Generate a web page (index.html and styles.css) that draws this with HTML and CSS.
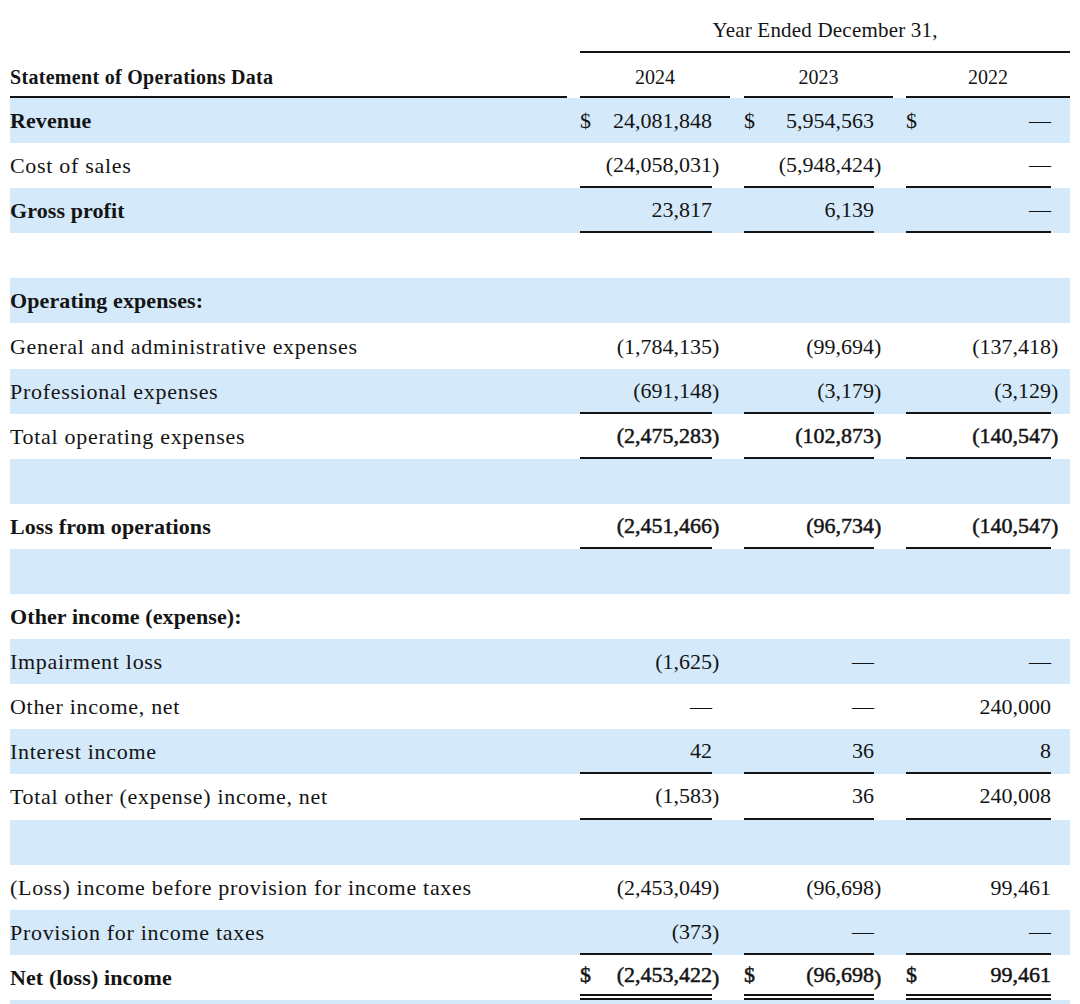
FILE: index.html
```html
<!DOCTYPE html>
<html lang="en">
<head>
<meta charset="utf-8">
<title>Statement of Operations Data</title>
<link rel="stylesheet" href="styles.css">
</head>
<body>
<table class="fin">
  <colgroup>
    <col class="c-label"><col class="c-gap1">
    <col class="c-dol"><col class="c-v24"><col class="c-p24"><col class="c-gap2">
    <col class="c-dol"><col class="c-v23"><col class="c-p23"><col class="c-gap1">
    <col class="c-dol"><col class="c-v22"><col class="c-p22">
  </colgroup>
  <thead>
    <tr class="h-top">
      <th colspan="2"></th>
      <th colspan="11" class="period">Year Ended December 31,</th>
    </tr>
    <tr class="h-years">
      <th class="stmt">Statement of Operations Data</th>
      <th></th>
      <th colspan="3" class="year">2024</th>
      <th></th>
      <th colspan="3" class="year">2023</th>
      <th></th>
      <th colspan="3" class="year">2022</th>
    </tr>
  </thead>
  <tbody>
    <tr class="alt strong">
      <td class="label">Revenue</td><td></td>
      <td class="dol">$</td><td class="val">24,081,848</td><td class="par"></td><td></td>
      <td class="dol">$</td><td class="val">5,954,563</td><td class="par"></td><td></td>
      <td class="dol">$</td><td class="val">—</td><td class="par"></td>
    </tr>
    <tr class="ul">
      <td class="label">Cost of sales</td><td></td>
      <td class="dol"></td><td class="val">(24,058,031</td><td class="par">)</td><td></td>
      <td class="dol"></td><td class="val">(5,948,424</td><td class="par">)</td><td></td>
      <td class="dol"></td><td class="val">—</td><td class="par"></td>
    </tr>
    <tr class="alt strong ul">
      <td class="label">Gross profit</td><td></td>
      <td class="dol"></td><td class="val">23,817</td><td class="par"></td><td></td>
      <td class="dol"></td><td class="val">6,139</td><td class="par"></td><td></td>
      <td class="dol"></td><td class="val">—</td><td class="par"></td>
    </tr>
    <tr class="blank"><td colspan="13"></td></tr>
    <tr class="alt strong">
      <td class="label">Operating expenses:</td><td colspan="12"></td>
    </tr>
    <tr>
      <td class="label">General and administrative expenses</td><td></td>
      <td class="dol"></td><td class="val">(1,784,135</td><td class="par">)</td><td></td>
      <td class="dol"></td><td class="val">(99,694</td><td class="par">)</td><td></td>
      <td class="dol"></td><td class="val">(137,418</td><td class="par">)</td>
    </tr>
    <tr class="alt ul">
      <td class="label">Professional expenses</td><td></td>
      <td class="dol"></td><td class="val">(691,148</td><td class="par">)</td><td></td>
      <td class="dol"></td><td class="val">(3,179</td><td class="par">)</td><td></td>
      <td class="dol"></td><td class="val">(3,129</td><td class="par">)</td>
    </tr>
    <tr class="ul boldnum">
      <td class="label">Total operating expenses</td><td></td>
      <td class="dol"></td><td class="val">(2,475,283</td><td class="par">)</td><td></td>
      <td class="dol"></td><td class="val">(102,873</td><td class="par">)</td><td></td>
      <td class="dol"></td><td class="val">(140,547</td><td class="par">)</td>
    </tr>
    <tr class="alt blank"><td colspan="13"></td></tr>
    <tr class="strong ul boldnum">
      <td class="label">Loss from operations</td><td></td>
      <td class="dol"></td><td class="val">(2,451,466</td><td class="par">)</td><td></td>
      <td class="dol"></td><td class="val">(96,734</td><td class="par">)</td><td></td>
      <td class="dol"></td><td class="val">(140,547</td><td class="par">)</td>
    </tr>
    <tr class="alt blank"><td colspan="13"></td></tr>
    <tr class="strong">
      <td class="label">Other income (expense):</td><td colspan="12"></td>
    </tr>
    <tr class="alt">
      <td class="label">Impairment loss</td><td></td>
      <td class="dol"></td><td class="val">(1,625</td><td class="par">)</td><td></td>
      <td class="dol"></td><td class="val">—</td><td class="par"></td><td></td>
      <td class="dol"></td><td class="val">—</td><td class="par"></td>
    </tr>
    <tr>
      <td class="label">Other income, net</td><td></td>
      <td class="dol"></td><td class="val">—</td><td class="par"></td><td></td>
      <td class="dol"></td><td class="val">—</td><td class="par"></td><td></td>
      <td class="dol"></td><td class="val">240,000</td><td class="par"></td>
    </tr>
    <tr class="alt ul">
      <td class="label">Interest income</td><td></td>
      <td class="dol"></td><td class="val">42</td><td class="par"></td><td></td>
      <td class="dol"></td><td class="val">36</td><td class="par"></td><td></td>
      <td class="dol"></td><td class="val">8</td><td class="par"></td>
    </tr>
    <tr class="ul">
      <td class="label">Total other (expense) income, net</td><td></td>
      <td class="dol"></td><td class="val">(1,583</td><td class="par">)</td><td></td>
      <td class="dol"></td><td class="val">36</td><td class="par"></td><td></td>
      <td class="dol"></td><td class="val">240,008</td><td class="par"></td>
    </tr>
    <tr class="alt blank"><td colspan="13"></td></tr>
    <tr>
      <td class="label">(Loss) income before provision for income taxes</td><td></td>
      <td class="dol"></td><td class="val">(2,453,049</td><td class="par">)</td><td></td>
      <td class="dol"></td><td class="val">(96,698</td><td class="par">)</td><td></td>
      <td class="dol"></td><td class="val">99,461</td><td class="par"></td>
    </tr>
    <tr class="alt ul">
      <td class="label">Provision for income taxes</td><td></td>
      <td class="dol"></td><td class="val">(373</td><td class="par">)</td><td></td>
      <td class="dol"></td><td class="val">—</td><td class="par"></td><td></td>
      <td class="dol"></td><td class="val">—</td><td class="par"></td>
    </tr>
    <tr class="strong dbl boldnum">
      <td class="label">Net (loss) income</td><td></td>
      <td class="dol">$</td><td class="val">(2,453,422</td><td class="par">)</td><td></td>
      <td class="dol">$</td><td class="val">(96,698</td><td class="par">)</td><td></td>
      <td class="dol">$</td><td class="val">99,461</td><td class="par"></td>
    </tr>
    <tr class="alt blank"><td colspan="13"></td></tr>
  </tbody>
</table>
</body>
</html>
```

FILE: styles.css
```css
html, body {
  margin: 0;
  padding: 0;
  background: #ffffff;
}

body {
  padding-left: 10px;
  color: #141414;
  font-family: "Liberation Serif", "Times New Roman", serif;
}

.fin {
  width: 1060px;
  table-layout: fixed;
  border-collapse: separate;
  border-spacing: 0;
}

.c-label { width: 557px; }
.c-gap1 { width: 13px; }
.c-gap2 { width: 14px; }
.c-dol { width: 20px; }
.c-v24 { width: 112px; }
.c-p24 { width: 18px; }
.c-v23 { width: 110px; }
.c-p23 { width: 19px; }
.c-v22 { width: 125px; }
.c-p22 { width: 19px; }

.fin th,
.fin td {
  padding: 0;
  white-space: nowrap;
  overflow: visible;
}

/* header */
.h-top { height: 53px; }
.h-top th {
  vertical-align: middle;
  padding-top: 9px;
}
.period {
  font-weight: normal;
  font-size: 21px;
  letter-spacing: 0.2px;
  text-align: center;
  border-bottom: 2px solid #141414;
}

.h-years { height: 45px; }
.h-years th {
  vertical-align: middle;
  padding-top: 5px;
}
.stmt {
  text-align: left;
  font-weight: bold;
  font-size: 20px;
  letter-spacing: 0.3px;
  padding-left: 1px;
  border-bottom: 2px solid #141414;
}
.year {
  font-weight: normal;
  font-size: 20px;
  text-align: center;
  border-bottom: 2px solid #141414;
}

/* body rows */
.fin tbody tr { height: 45.1px; }
.fin tbody td {
  vertical-align: middle;
  font-size: 22px;
  line-height: 25px;
}
.alt td { background: #d4e9f9; }

.label {
  padding-left: 1px;
  letter-spacing: 0.7px;
}
.strong .label {
  font-weight: bold;
  letter-spacing: 0.1px;
}

.dol {
  text-align: left;
  padding-left: 3px;
}
.val { text-align: right; }
.par { text-align: left; }

.boldnum .dol,
.boldnum .val,
.boldnum .par {
  -webkit-text-stroke: 0.5px #141414;
}

.ul .dol,
.ul .val { border-bottom: 2px solid #141414; }

.dbl .dol,
.dbl .val { border-bottom: 6px double #141414; }
```
